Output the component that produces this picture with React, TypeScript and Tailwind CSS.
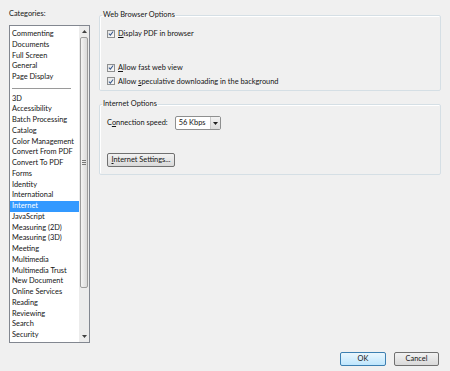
import React from "react";

const categories = [
	"Commenting",
	"Documents",
	"Full Screen",
	"General",
	"Page Display",
	"-",
	"3D",
	"Accessibility",
	"Batch Processing",
	"Catalog",
	"Color Management",
	"Convert From PDF",
	"Convert To PDF",
	"Forms",
	"Identity",
	"International",
	"Internet",
	"JavaScript",
	"Measuring (2D)",
	"Measuring (3D)",
	"Meeting",
	"Multimedia",
	"Multimedia Trust",
	"New Document",
	"Online Services",
	"Reading",
	"Reviewing",
	"Search",
	"Security",
	"Spelling",
];

function Check({ children }: { children: React.ReactNode }) {
	return (
		<div className="flex h-[13.3px] items-center gap-[3px]">
			<span className="flex h-[8px] w-[8px] items-center justify-center border border-[#8e8f8f] bg-gradient-to-br from-[#e6e6e6] to-[#fafafa]">
				<svg width="7" height="7" viewBox="0 0 7 7">
					<path d="M1 3.6 L2.8 5.4 L6 1.2" fill="none" stroke="#3a5a8c" strokeWidth="1.2" />
				</svg>
			</span>
			<span>{children}</span>
		</div>
	);
}

function Btn({ children, def, w }: { children: React.ReactNode; def?: boolean; w: string }) {
	return (
		<button
			className={
				def
					? `h-[14px] ${w} rounded-[2px] border border-[#3c7fb1] bg-gradient-to-b from-[#eaf6fd] to-[#bee6fd] leading-none`
					: `h-[14px] ${w} rounded-[2px] border border-[#707070] bg-gradient-to-b from-[#f2f2f2] to-[#d9d9d9] leading-none`
			}
		>
			{children}
		</button>
	);
}

export default function App() {
	return (
		<div className="flex h-[371px] w-[450px] flex-col bg-[#f0f0f0] font-['Lato','Noto_Sans',sans-serif] text-[7.4px] text-[#141414]">
			<div className="flex h-[343px]">
				{/* left: categories */}
				<div className="flex w-[90px] flex-col pl-[9px] pt-[9px]">
					<div className="h-[16px] leading-[10px]">Categories:</div>
					<div className="flex h-[318px] w-[81px] overflow-hidden border border-[#828790] bg-white">
						<div className="flex-1 overflow-hidden pt-[3px]">
							{categories.map((c, i) =>
								c === "-" ? (
									<div key={i} className="flex h-[10.75px] items-center pl-[2px] pr-[8px]">
										<div className="h-px w-full bg-[#9a9a9a]" />
									</div>
								) : (
									<div
										key={i}
										className={
											c === "Internet"
												? "h-[10.75px] whitespace-nowrap bg-[#3399ff] pl-[2px] leading-[10.75px] text-white"
												: "h-[10.75px] whitespace-nowrap pl-[2px] leading-[10.75px]"
										}
									>
										{c}
									</div>
								),
							)}
						</div>
						<div className="flex w-[10px] flex-col bg-[#ececec]">
							<div className="flex h-[11px] items-center justify-center">
								<svg width="5" height="3" viewBox="0 0 5 3">
									<path d="M0 3 L2.5 0 L5 3 Z" fill="#404040" />
								</svg>
							</div>
							<div className="mx-[1px] flex h-[251px] items-center justify-center rounded-[2px] border border-[#9c9c9c] bg-gradient-to-r from-[#f4f4f4] to-[#dadada]">
								<div className="flex flex-col gap-[1px]">
									<div className="h-px w-[4px] bg-[#777]" />
									<div className="h-px w-[4px] bg-[#777]" />
									<div className="h-px w-[4px] bg-[#777]" />
								</div>
							</div>
							<div className="flex-1" />
							<div className="flex h-[11px] items-center justify-center">
								<svg width="5" height="3" viewBox="0 0 5 3">
									<path d="M0 0 L2.5 3 L5 0 Z" fill="#404040" />
								</svg>
							</div>
						</div>
					</div>
				</div>

				{/* right: option groups */}
				<div className="ml-[9px] flex w-[342px] flex-col gap-[8px] pt-[10px]">
					<fieldset className="h-[81px] rounded-[2px] border border-[#d5dfe5] px-[7px] shadow-[inset_1px_1px_0_#fff]">
						<legend className="ml-[-5px] px-[1px] leading-[10px]">Web Browser Options</legend>
						<div className="pt-[7px]">
							<Check>
								<span className="underline">D</span>isplay PDF in browser
							</Check>
						</div>
						<div className="flex flex-col pt-[21px]">
							<Check>
								<span className="underline">A</span>llow fast web view
							</Check>
							<Check>
								Allow <span className="underline">s</span>peculative downloading in the background
							</Check>
						</div>
					</fieldset>

					<fieldset className="h-[76px] rounded-[2px] border border-[#d5dfe5] px-[7px] shadow-[inset_1px_1px_0_#fff]">
						<legend className="ml-[-5px] px-[1px] leading-[10px]">Internet Options</legend>
						<div className="flex items-center gap-[7px] pt-[7px]">
							<span>
								C<span className="underline">o</span>nnection speed:
							</span>
							<div className="flex h-[14px] w-[46px] items-center rounded-[2px] border border-[#8e8f8f] bg-white pl-[3px]">
								<span className="flex-1">56 Kbps</span>
								<div className="flex h-full w-[10px] items-center justify-center border-l border-[#c9c9c9] bg-gradient-to-b from-[#f2f2f2] to-[#dcdcdc]">
									<svg width="5" height="3" viewBox="0 0 5 3">
										<path d="M0 0 L2.5 3 L5 0 Z" fill="#202020" />
									</svg>
								</div>
							</div>
						</div>
						<div className="pt-[23px]">
							<Btn w="w-[68px]">
								<span className="underline">I</span>nternet Settings...
							</Btn>
						</div>
					</fieldset>
				</div>
			</div>

			<div className="flex justify-end gap-[8px] pr-[11px] pt-[9px]">
				<Btn def w="w-[46px]">
					OK
				</Btn>
				<Btn w="w-[45px]">Cancel</Btn>
			</div>
		</div>
	);
}
